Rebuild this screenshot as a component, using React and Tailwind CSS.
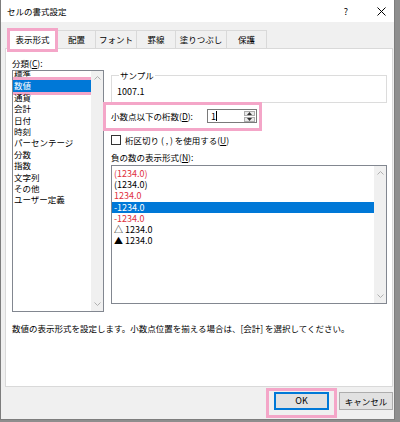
import React from 'react';

const categories = ['標準', '数値', '通貨', '会計', '日付', '時刻', 'パーセンテージ', '分数', '指数', '文字列', 'その他', 'ユーザー定義'];

const negatives = [
  { text: '(1234.0)', red: true },
  { text: '(1234.0)' },
  { text: '1234.0', red: true },
  { text: '-1234.0', selected: true },
  { text: '-1234.0', red: true },
  { text: '△ 1234.0' },
  { text: '▲ 1234.0' },
];

const tabs = [
  { label: '配置', w: 'w-[38px]' },
  { label: 'フォント', w: 'w-[41px]' },
  { label: '罫線', w: 'w-[39px]' },
  { label: '塗りつぶし', w: 'w-[51px]' },
  { label: '保護', w: 'w-[40px]' },
];

function Chevron({ up }) {
  return (
    <svg width="7" height="4" viewBox="0 0 7 4" className="block">
      <path
        d={up ? 'M0.5 3.5 L3.5 0.5 L6.5 3.5' : 'M0.5 0.5 L3.5 3.5 L6.5 0.5'}
        fill="none"
        stroke="#b0b0b0"
        strokeWidth="1"
      />
    </svg>
  );
}

function Scrollbar() {
  return (
    <div className="flex w-[12px] shrink-0 flex-col items-center justify-between bg-[#f0f0f0] py-[5px]">
      <Chevron up />
      <Chevron />
    </div>
  );
}

// pink annotation frame drawn over the screenshot
function Mark({ className }) {
  return <span className={'pointer-events-none absolute border-[3px] border-[#f4a6c8] ' + className} />;
}

function SpinArrow({ up }) {
  return (
    <svg width="5" height="3" viewBox="0 0 5 3" className="block">
      <path d={up ? 'M0 3 L2.5 0 L5 3 Z' : 'M0 0 L2.5 3 L5 0 Z'} fill="#333" />
    </svg>
  );
}

export default function App() {
  return (
    <div className="h-[422px] w-[400px] overflow-hidden bg-[#8e8e8e] font-['Noto_Sans_CJK_JP',sans-serif] text-[8.5px] text-black">
      <div className="flex h-[420px] w-[395px] flex-col border border-t-0 border-[#7d7d7d] bg-[#f0f0f0]">
        {/* title bar */}
        <div className="flex h-[22px] items-center bg-white pl-[6px]">
          <span className="text-[8.5px] leading-none">セルの書式設定</span>
          <span className="ml-auto w-[10px] text-center text-[9px] leading-none">?</span>
          <svg width="9" height="9" viewBox="0 0 9 9" className="ml-[26px] mr-[8px]">
            <path d="M0.5 0.5 L8.5 8.5 M8.5 0.5 L0.5 8.5" stroke="#000" strokeWidth="1" />
          </svg>
        </div>

        {/* tabs */}
        <div className="ml-[4px] flex h-[26px] items-end pl-[2px] pt-[6px]">
          <div className="relative z-10 -mb-px flex h-[21px] w-[51px] items-center justify-center border border-b-0 border-[#d9d9d9] bg-white">
            表示形式
            <Mark className="-left-[1px] -right-[1px] -top-[1px] -bottom-[3px]" />
          </div>
          {tabs.map(t => (
            <div
              key={t.label}
              className={'flex h-[18px] items-center justify-center border border-b-0 border-l-0 border-[#d9d9d9] bg-[#f0f0f0] ' + t.w}
            >
              {t.label}
            </div>
          ))}
        </div>

        {/* panel */}
        <div className="ml-[4px] h-[339px] w-[388px] border border-[#d9d9d9] bg-white pl-[6px] pt-[7px]">
          <div className="flex">
            <div className="flex w-[92px] flex-col">
              <div className="h-[14px] leading-[14px]">
                分類(<u>C</u>):
              </div>
              <div className="flex h-[242px] border border-[#828790] bg-white">
                <div className="flex-1 overflow-hidden">
                  <div className="-mt-[2px]">
                    {categories.map(c => (
                      <div
                        key={c}
                        className={
                          'relative h-[11.4px] whitespace-nowrap pl-[1px] leading-[11.4px] ' +
                          (c === '数値' ? 'bg-[#0078d7] text-white' : '')
                        }
                      >
                        {c}
                        {c === '数値' && <Mark className="-left-[9px] -right-[9px] -top-[3px] -bottom-[3px]" />}
                      </div>
                    ))}
                  </div>
                </div>
                <Scrollbar />
              </div>
            </div>

            <div className="ml-[7px] flex w-[276px] flex-col">
              <fieldset className="mt-[13px] border border-[#dcdcdc] pb-[4px] pl-[5px]">
                <legend className="ml-[2px] px-[1px] leading-[12px]">サンプル</legend>
                <div className="pt-[4px] text-[9px] leading-[13px]">1007.1</div>
              </fieldset>

              <div className="relative mt-[6px] flex h-[14px] items-center self-start">
                <span className="w-[96px] whitespace-nowrap">
                  小数点以下の桁数(<u>D</u>):
                </span>
                <div className="flex h-[14px] w-[50px] items-stretch border border-[#7a7a7a] bg-white">
                  <span className="flex-1 pl-[3px] text-[9px] leading-[12px]">
                    1<span className="inline-block h-[10px] w-px translate-y-[1px] bg-black" />
                  </span>
                  <div className="mr-[1px] my-[1px] flex w-[11px] flex-col gap-px">
                    <div className="flex flex-1 items-center justify-center border border-[#adadad] bg-[#e9e9e9]">
                      <SpinArrow up />
                    </div>
                    <div className="flex flex-1 items-center justify-center border border-[#adadad] bg-[#e9e9e9]">
                      <SpinArrow />
                    </div>
                  </div>
                </div>
                <Mark className="-left-[8px] -top-[7px] -bottom-[8px] -right-[5px]" />
              </div>

              <div className="mt-[11px] flex h-[12px] items-center">
                <span className="h-[10px] w-[10px] border border-[#333] bg-white" />
                <span className="ml-[4px] whitespace-nowrap">
                  桁区切り ( , ) を使用する(<u>U</u>)
                </span>
              </div>

              <div className="mt-[5px] h-[13px] leading-[13px]">
                負の数の表示形式(<u>N</u>):
              </div>

              <div className="mt-[1px] flex h-[139px] border border-[#828790] bg-white">
                <div className="flex-1 pt-[2px]">
                  {negatives.map((n, i) => (
                    <div
                      key={i}
                      className={
                        'h-[11.2px] pl-[2px] text-[9px] leading-[11.2px] ' +
                        (n.selected ? 'bg-[#0078d7] text-white' : n.red ? 'text-[#e0303c]' : '')
                      }
                    >
                      {n.text}
                    </div>
                  ))}
                </div>
                <Scrollbar />
              </div>
            </div>
          </div>

          <div className="mt-[10px] h-[13px] whitespace-nowrap leading-[13px]">
            数値の表示形式を設定します。小数点位置を揃える場合は、[会計] を選択してください。
          </div>
        </div>

        {/* footer buttons */}
        <div className="mt-[5px] flex justify-end gap-[10px] pr-[1px]">
          <div className="relative flex h-[18px] w-[55px] items-center justify-center border-2 border-[#0078d7] bg-[#e1e1e1] text-[9px]">
            OK
            <Mark className="-left-[10px] -right-[10px] -top-[6px] -bottom-[10px]" />
          </div>
          <div className="flex h-[18px] w-[54px] items-center justify-center border border-[#adadad] bg-[#e1e1e1]">
            キャンセル
          </div>
        </div>
      </div>
    </div>
  );
}
